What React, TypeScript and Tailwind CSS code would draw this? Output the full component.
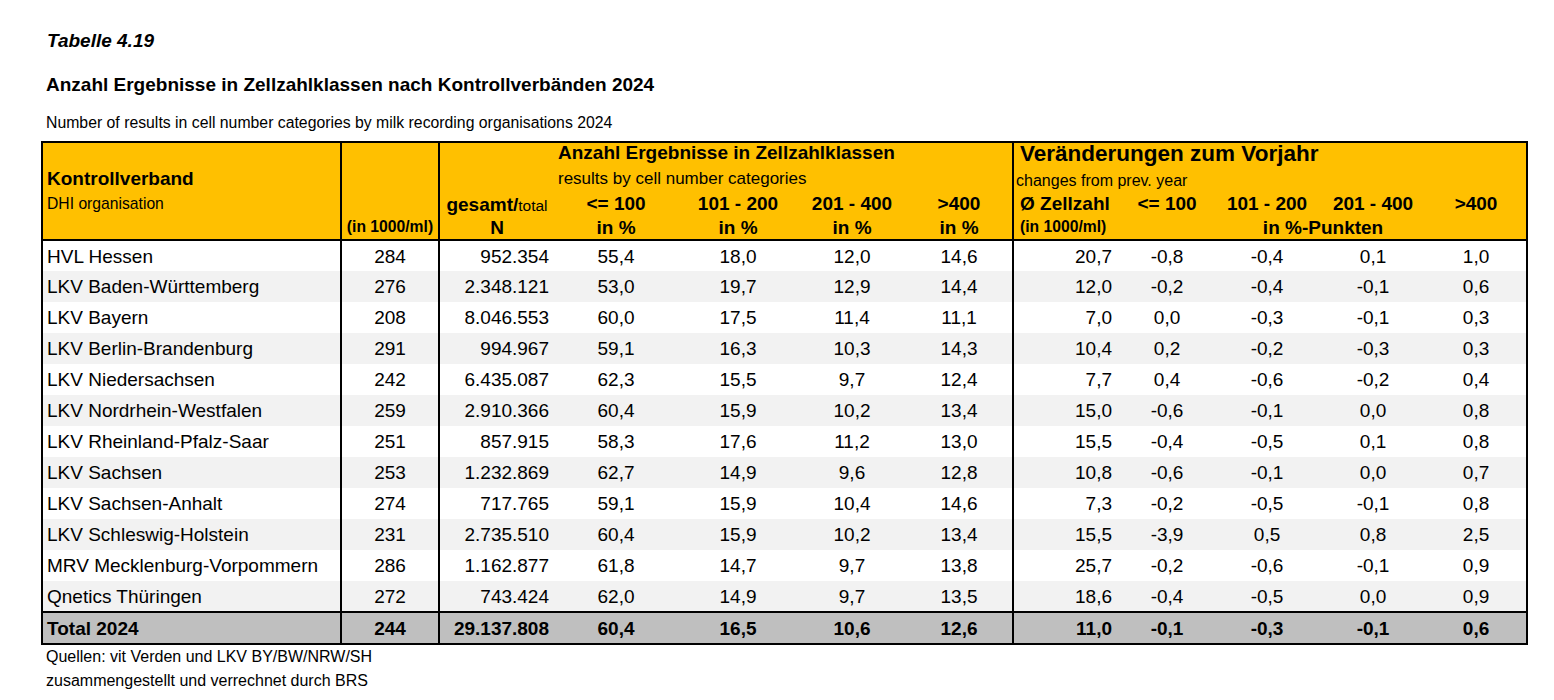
import React from 'react';

type Row = {
  name: string;
  zz: string;
  n: string;
  a: string;
  b: string;
  c: string;
  d: string;
  dz: string;
  da: string;
  db: string;
  dc: string;
  dd: string;
};

const rows: Row[] = [
  { name: 'HVL Hessen', zz: '284', n: '952.354', a: '55,4', b: '18,0', c: '12,0', d: '14,6', dz: '20,7', da: '-0,8', db: '-0,4', dc: '0,1', dd: '1,0' },
  { name: 'LKV Baden-Württemberg', zz: '276', n: '2.348.121', a: '53,0', b: '19,7', c: '12,9', d: '14,4', dz: '12,0', da: '-0,2', db: '-0,4', dc: '-0,1', dd: '0,6' },
  { name: 'LKV Bayern', zz: '208', n: '8.046.553', a: '60,0', b: '17,5', c: '11,4', d: '11,1', dz: '7,0', da: '0,0', db: '-0,3', dc: '-0,1', dd: '0,3' },
  { name: 'LKV Berlin-Brandenburg', zz: '291', n: '994.967', a: '59,1', b: '16,3', c: '10,3', d: '14,3', dz: '10,4', da: '0,2', db: '-0,2', dc: '-0,3', dd: '0,3' },
  { name: 'LKV Niedersachsen', zz: '242', n: '6.435.087', a: '62,3', b: '15,5', c: '9,7', d: '12,4', dz: '7,7', da: '0,4', db: '-0,6', dc: '-0,2', dd: '0,4' },
  { name: 'LKV Nordrhein-Westfalen', zz: '259', n: '2.910.366', a: '60,4', b: '15,9', c: '10,2', d: '13,4', dz: '15,0', da: '-0,6', db: '-0,1', dc: '0,0', dd: '0,8' },
  { name: 'LKV Rheinland-Pfalz-Saar', zz: '251', n: '857.915', a: '58,3', b: '17,6', c: '11,2', d: '13,0', dz: '15,5', da: '-0,4', db: '-0,5', dc: '0,1', dd: '0,8' },
  { name: 'LKV Sachsen', zz: '253', n: '1.232.869', a: '62,7', b: '14,9', c: '9,6', d: '12,8', dz: '10,8', da: '-0,6', db: '-0,1', dc: '0,0', dd: '0,7' },
  { name: 'LKV Sachsen-Anhalt', zz: '274', n: '717.765', a: '59,1', b: '15,9', c: '10,4', d: '14,6', dz: '7,3', da: '-0,2', db: '-0,5', dc: '-0,1', dd: '0,8' },
  { name: 'LKV Schleswig-Holstein', zz: '231', n: '2.735.510', a: '60,4', b: '15,9', c: '10,2', d: '13,4', dz: '15,5', da: '-3,9', db: '0,5', dc: '0,8', dd: '2,5' },
  { name: 'MRV Mecklenburg-Vorpommern', zz: '286', n: '1.162.877', a: '61,8', b: '14,7', c: '9,7', d: '13,8', dz: '25,7', da: '-0,2', db: '-0,6', dc: '-0,1', dd: '0,9' },
  { name: 'Qnetics Thüringen', zz: '272', n: '743.424', a: '62,0', b: '14,9', c: '9,7', d: '13,5', dz: '18,6', da: '-0,4', db: '-0,5', dc: '0,0', dd: '0,9' },
];

const total: Row = { name: 'Total 2024', zz: '244', n: '29.137.808', a: '60,4', b: '16,5', c: '10,6', d: '12,6', dz: '11,0', da: '-0,1', db: '-0,3', dc: '-0,1', dd: '0,6' };

const DataRow: React.FC<{ r: Row; bg: string; bold?: boolean }> = ({ r, bg, bold }) => {
  const top = bold ? 'border-t-2 border-black' : '';
  return (
    <tr className={`${bg} ${bold ? 'font-bold h-[32px]' : 'h-[31px]'}`}>
      <td className={`pl-[4px] border-r-2 border-black ${top}`}>{r.name}</td>
      <td className={`text-center border-r-2 border-black ${top}`}>{r.zz}</td>
      <td className={`text-right pr-[5px] ${top}`}>{r.n}</td>
      <td className={`text-center ${top}`}>{r.a}</td>
      <td className={`text-center ${top}`}>{r.b}</td>
      <td className={`text-center ${top}`}>{r.c}</td>
      <td className={`text-center border-r-2 border-black ${top}`}>{r.d}</td>
      <td className={`text-right pr-[8px] ${top}`}>{r.dz}</td>
      <td className={`text-center ${top}`}>{r.da}</td>
      <td className={`text-center ${top}`}>{r.db}</td>
      <td className={`text-center ${top}`}>{r.dc}</td>
      <td className={`text-center ${top}`}>{r.dd}</td>
    </tr>
  );
};

export default function App() {
  return (
    <div className="bg-white min-h-screen pl-[41px] pt-[30px] text-black font-['Liberation_Sans',Arial,sans-serif]">
      <div className="pl-[6px] text-[19px] leading-[22px] font-bold italic">Tabelle 4.19</div>
      <div className="pl-[5px] mt-[22px] text-[19px] leading-[22px] font-bold">
        Anzahl Ergebnisse in Zellzahlklassen nach Kontrollverbänden 2024
      </div>
      <div className="pl-[5px] mt-[17px] text-[15.8px] leading-[20px]">
        Number of results in cell number categories by milk recording organisations 2024
      </div>

      <table className="mt-[8px] w-[1487px] table-fixed border-collapse border-2 border-black text-[19px] leading-none">
        <colgroup>
          <col className="w-[299px]" />
          <col className="w-[98px]" />
          <col className="w-[115px]" />
          <col className="w-[124px]" />
          <col className="w-[120px]" />
          <col className="w-[108px]" />
          <col className="w-[107px]" />
          <col className="w-[107px]" />
          <col className="w-[94px]" />
          <col className="w-[106px]" />
          <col className="w-[106px]" />
          <col className="w-[101px]" />
        </colgroup>
        <thead className="bg-[#ffc000] font-bold">
          <tr className="h-[25px]">
            <td className="border-r-2 border-black" />
            <td className="border-r-2 border-black" />
            <td />
            <td colSpan={4} className="pl-[4px] pb-[5px] border-r-2 border-black whitespace-nowrap">
              Anzahl Ergebnisse in Zellzahlklassen
            </td>
            <td colSpan={5} className="pl-[6px] pb-[1px] text-[22.5px] whitespace-nowrap">
              Veränderungen zum Vorjahr
            </td>
          </tr>
          <tr className="h-[24px]">
            <td className="pl-[4px] pb-[2px] border-r-2 border-black">Kontrollverband</td>
            <td className="border-r-2 border-black" />
            <td />
            <td colSpan={4} className="pl-[4px] pb-[2px] font-normal text-[17px] border-r-2 border-black whitespace-nowrap">
              results by cell number categories
            </td>
            <td colSpan={5} className="pl-[2px] pt-[3px] font-normal text-[16px] whitespace-nowrap">
              changes from prev. year
            </td>
          </tr>
          <tr className="h-[24px]">
            <td className="pl-[4px] font-normal text-[15.7px] align-top pt-[5px] border-r-2 border-black">DHI organisation</td>
            <td className="border-r-2 border-black" />
            <td className="text-center whitespace-nowrap pt-[2px]">
              gesamt/<span className="font-normal text-[15.5px]">total</span>
            </td>
            <td className="text-center">&lt;= 100</td>
            <td className="text-center">101 - 200</td>
            <td className="text-center">201 - 400</td>
            <td className="text-center border-r-2 border-black">&gt;400</td>
            <td className="pl-[6px] whitespace-nowrap">Ø Zellzahl</td>
            <td className="text-center whitespace-nowrap">&lt;= 100</td>
            <td className="text-center whitespace-nowrap">101 - 200</td>
            <td className="text-center whitespace-nowrap">201 - 400</td>
            <td className="text-center">&gt;400</td>
          </tr>
          <tr className="h-[25px]">
            <td className="border-r-2 border-b-2 border-black" />
            <td className="text-center text-[15.7px] whitespace-nowrap border-r-2 border-b-2 border-black">(in 1000/ml)</td>
            <td className="text-center border-b-2 border-black">N</td>
            <td className="text-center border-b-2 border-black">in %</td>
            <td className="text-center border-b-2 border-black">in %</td>
            <td className="text-center border-b-2 border-black">in %</td>
            <td className="text-center border-r-2 border-b-2 border-black">in %</td>
            <td className="pl-[6px] text-[15.7px] whitespace-nowrap border-b-2 border-black">(in 1000/ml)</td>
            <td colSpan={4} className="text-center border-b-2 border-black">in %-Punkten</td>
          </tr>
        </thead>
        <tbody>
          {rows.map((r, i) => (
            <DataRow key={r.name} r={r} bg={i % 2 === 1 ? 'bg-[#f2f2f2]' : 'bg-white'} />
          ))}
          <DataRow r={total} bg="bg-[#bfbfbf]" bold />
        </tbody>
      </table>

      <div className="pl-[5px] text-[16px] leading-[24px]">Quellen: vit Verden und LKV BY/BW/NRW/SH</div>
      <div className="pl-[5px] text-[16px] leading-[24px]">zusammengestellt und verrechnet durch BRS</div>
    </div>
  );
}
